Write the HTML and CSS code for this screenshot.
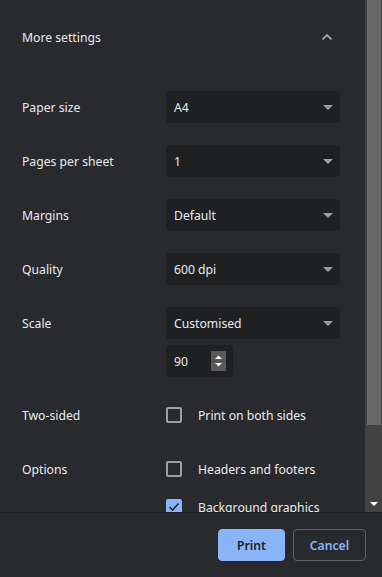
FILE: index.html
```html
<!DOCTYPE html>
<html lang="en">
<head>
  <meta charset="UTF-8" />
  <meta name="viewport" content="width=device-width, initial-scale=1" />
  <title>Print</title>
  <link rel="stylesheet" href="styles.css">
</head>
<body>
  <div class="panel">
    <div class="scroller">
      <div class="content">
        <div class="more">
          <span>More settings</span>
          <svg class="chevron" width="12" height="8" viewBox="0 0 12 8">
            <path d="M1.5 6.5 L6 2 L10.5 6.5" fill="none" stroke="#9aa0a6" stroke-width="1.8"/>
          </svg>
        </div>

        <div class="setting">
          <div class="label">Paper size</div>
          <div class="controls">
            <div class="select"><span>A4</span><i class="caret"></i></div>
          </div>
        </div>

        <div class="setting">
          <div class="label">Pages per sheet</div>
          <div class="controls">
            <div class="select"><span>1</span><i class="caret"></i></div>
          </div>
        </div>

        <div class="setting">
          <div class="label">Margins</div>
          <div class="controls">
            <div class="select"><span>Default</span><i class="caret"></i></div>
          </div>
        </div>

        <div class="setting">
          <div class="label">Quality</div>
          <div class="controls">
            <div class="select"><span>600 dpi</span><i class="caret"></i></div>
          </div>
        </div>

        <div class="setting">
          <div class="label">Scale</div>
          <div class="controls">
            <div class="select"><span>Customised</span><i class="caret"></i></div>
            <div class="number">
              <span>90</span>
              <div class="spin">
                <svg width="15" height="20" viewBox="0 0 15 20">
                  <path d="M4 8 L7.5 4.5 L11 8 Z" fill="#ffffff"/>
                  <line x1="0" y1="10" x2="15" y2="10" stroke="#4a4a4a" stroke-width="1"/>
                  <path d="M4 12 L7.5 15.5 L11 12 Z" fill="#ffffff"/>
                </svg>
              </div>
            </div>
          </div>
        </div>

        <div class="setting">
          <div class="label">Two-sided</div>
          <div class="controls">
            <label class="check"><i class="box"></i><span>Print on both sides</span></label>
          </div>
        </div>

        <div class="setting">
          <div class="label">Options</div>
          <div class="controls">
            <label class="check"><i class="box"></i><span>Headers and footers</span></label>
            <label class="check"><i class="box checked">
              <svg width="12" height="10" viewBox="0 0 12 10">
                <path d="M1.5 5 L4.5 8 L10.5 1.5" fill="none" stroke="#202124" stroke-width="1.6"/>
              </svg>
            </i><span>Background graphics</span></label>
          </div>
        </div>
      </div>

      <div class="scrollbar">
        <div class="thumb"></div>
        <div class="track">
          <i class="arrow"></i>
        </div>
      </div>
    </div>

    <footer>
      <button class="btn primary">Print</button>
      <button class="btn cancel">Cancel</button>
    </footer>
  </div>
</body>
</html>
```

FILE: styles.css
```css
* {
  margin: 0;
  padding: 0;
  box-sizing: border-box;
}
html, body {
  height: 100%;
  background-color: #292a2d;
  color: #e8eaed;
  font-family: 'Noto Sans', 'Open Sans', sans-serif;
  font-size: 12.2px;
}
.panel {
  height: 577px;
  display: flex;
  flex-direction: column;
}
.scroller {
  height: 512px;
  display: flex;
  overflow: hidden;
}
.content {
  flex: 1;
  padding: 0 25px 0 22px;
}
.more {
  height: 74px;
  display: flex;
  align-items: center;
  justify-content: space-between;
  padding-right: 7px;
  margin-bottom: 17px;
}
.chevron {
  display: block;
}
.setting {
  display: flex;
  margin-bottom: 22px;
}
.label {
  width: 144px;
  height: 32px;
  display: flex;
  align-items: center;
}
.controls {
  flex: 1;
  display: flex;
  flex-direction: column;
  gap: 6px;
}
.select {
  height: 32px;
  background-color: #1f2022;
  border-radius: 4px;
  display: flex;
  align-items: center;
  justify-content: space-between;
  padding: 0 7px 0 8px;
}
.caret {
  width: 0;
  height: 0;
  border-left: 5px solid transparent;
  border-right: 5px solid transparent;
  border-top: 5px solid #9aa0a6;
}
.number {
  width: 67px;
  height: 32px;
  background-color: #1f2022;
  border-radius: 4px;
  display: flex;
  align-items: center;
  justify-content: space-between;
  padding: 0 7px 0 8px;
}
.spin {
  width: 15px;
  height: 20px;
  background-color: #5a5a5a;
}
.spin svg {
  display: block;
}
.check {
  height: 32px;
  display: flex;
  align-items: center;
  gap: 16px;
}
.box {
  width: 16px;
  height: 16px;
  border: 2px solid #9aa0a6;
  border-radius: 2px;
  display: flex;
  align-items: center;
  justify-content: center;
}
.box.checked {
  background-color: #8ab4f8;
  border-color: #8ab4f8;
}
.scrollbar {
  width: 17px;
  display: flex;
  flex-direction: column;
  background-color: #424242;
}
.thumb {
  height: 425px;
  margin: 0 1px 0 2px;
  background-color: #686868;
}
.track {
  flex: 1;
  display: flex;
  align-items: flex-end;
  justify-content: center;
  padding-bottom: 6px;
}
.arrow {
  width: 0;
  height: 0;
  border-left: 4px solid transparent;
  border-right: 4px solid transparent;
  border-top: 4px solid #ffffff;
}
footer {
  flex: 1;
  border-top: 1px solid #1f2022;
  display: flex;
  justify-content: flex-end;
  gap: 8px;
  padding: 16px 16px 0 0;
}
.btn {
  height: 32px;
  border-radius: 4px;
  border: 1px solid #5f6368;
  background: transparent;
  color: #8ab4f8;
  font-family: inherit;
  font-size: 12.2px;
  font-weight: 600;
}
.btn.primary {
  width: 67px;
  background-color: #8ab4f8;
  border-color: #8ab4f8;
  color: #202124;
}
.btn.cancel {
  width: 73px;
}
```
